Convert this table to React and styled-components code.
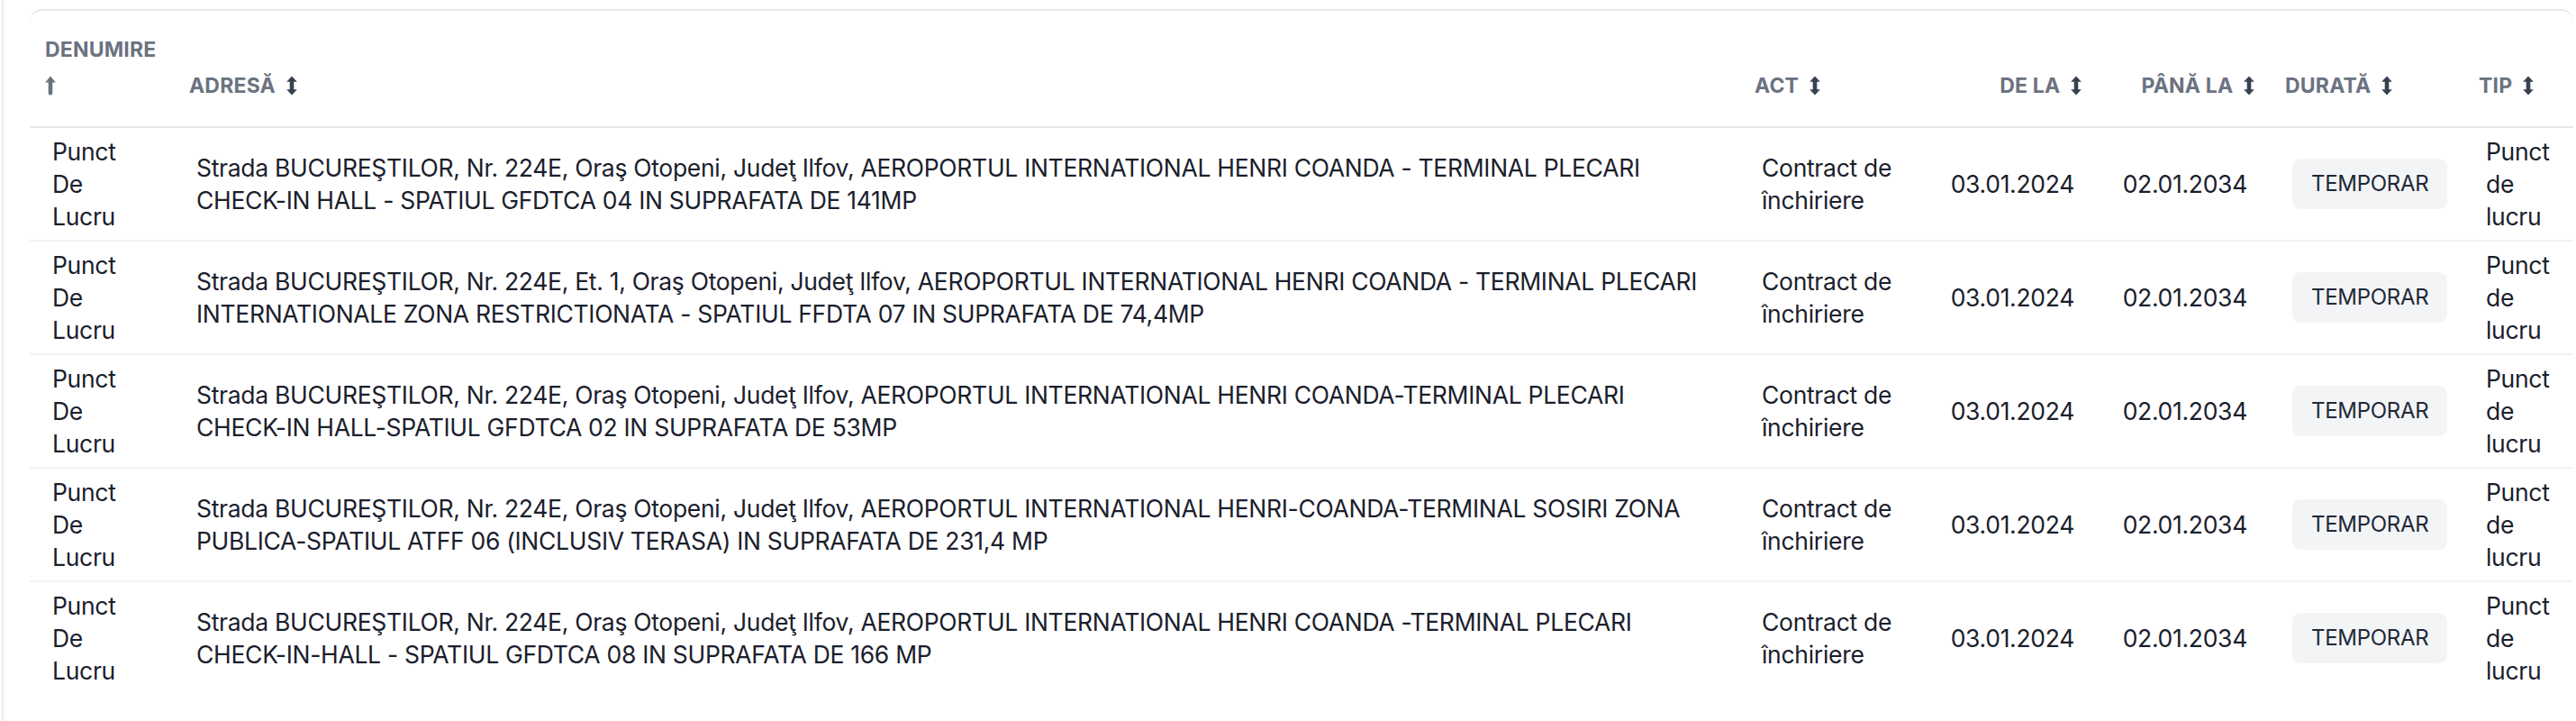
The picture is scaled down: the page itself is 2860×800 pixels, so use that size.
import React from "react";
import styled, { createGlobalStyle, css } from "styled-components";

const GlobalStyle = createGlobalStyle`
  html, body {
    margin: 0;
    padding: 0;
    background: #ffffff;
  }
  body {
    font-family: Inter, "Noto Sans", "Liberation Sans", sans-serif;
    color: #1f2937;
  }
`;

const Frame = styled.div`
  margin-left: 2px;
  border-left: 2px solid #ececee;
  padding: 10px 3px 30px 29px;
  min-height: 760px;
`;

const Card = styled.div`
  border-top: 2px solid #e5e7eb;
  border-radius: 14px 14px 0 0;
`;

const Table = styled.table`
  width: 2824px;
  table-layout: fixed;
  border-collapse: collapse;
`;

const HeadCell = styled.th`
  padding: 23px 17px 25px;
  vertical-align: bottom;
  text-align: ${(p) => (p.$right ? "right" : "left")};
  font-size: 23px;
  line-height: 40px;
  font-weight: 700;
  letter-spacing: 0.2px;
  text-transform: uppercase;
  color: #6b7280;
  border-bottom: 2px solid #e5e7eb;
`;

const Row = styled.tr`
  border-bottom: 2px solid #f1f2f4;
  &:last-child {
    border-bottom: none;
  }
`;

const Cell = styled.td`
  padding: 8px 24px 8px 25px;
  vertical-align: middle;
  font-size: 26.5px;
  line-height: 36px;
  letter-spacing: -0.3px;
  color: #1a202c;
  text-align: ${(p) => (p.$right ? "right" : "left")};
  ${(p) =>
    p.$right &&
    css`
      padding: 8px 25px 8px 24px;
    `}
  ${(p) =>
    p.$tight &&
    css`
      padding-right: 0;
    `}
`;

const SortIcon = styled.svg`
  display: inline-block;
  width: 12px;
  height: 22px;
  margin-left: 6px;
  vertical-align: -3px;
  fill: ${(p) => (p.$active ? "#6b7280" : "#374151")};
`;

const Badge = styled.span`
  display: inline-block;
  padding: 0 21px;
  height: 56px;
  line-height: 56px;
  border-radius: 9px;
  background: #f3f4f6;
  font-size: 24px;
  letter-spacing: -0.3px;
  color: #1f2937;
`;

const UpDown = () => (
  <SortIcon viewBox="0 0 12 22">
    <path d="M6 0.5 L11.8 6.8 L8.3 6.8 L8.3 15.2 L11.8 15.2 L6 21.5 L0.2 15.2 L3.7 15.2 L3.7 6.8 L0.2 6.8 Z" />
  </SortIcon>
);

const ArrowUp = () => (
  <SortIcon $active viewBox="0 0 12 22" style={{ marginLeft: 0 }}>
    <path d="M6 0.5 L11.8 7.5 L8.3 7.5 L8.3 19.3 Q8.3 21.5 6 21.5 Q3.7 21.5 3.7 19.3 L3.7 7.5 L0.2 7.5 Z" />
  </SortIcon>
);

const columns = [
  { key: "name", label: "Denumire", width: 160, icon: "up" },
  { key: "address", label: "Adresă", width: 1738 },
  { key: "act", label: "Act", width: 204 },
  { key: "from", label: "De la", width: 193, right: true },
  { key: "to", label: "Până la", width: 192, right: true },
  { key: "duration", label: "Durată", width: 215 },
  { key: "type", label: "Tip", width: 122 },
];

const rows = [
  "Strada BUCUREŞTILOR, Nr. 224E, Oraş Otopeni, Judeţ Ilfov, AEROPORTUL INTERNATIONAL HENRI COANDA - TERMINAL PLECARI CHECK-IN HALL - SPATIUL GFDTCA 04 IN SUPRAFATA DE 141MP",
  "Strada BUCUREŞTILOR, Nr. 224E, Et. 1, Oraş Otopeni, Judeţ Ilfov, AEROPORTUL INTERNATIONAL HENRI COANDA - TERMINAL PLECARI INTERNATIONALE ZONA RESTRICTIONATA - SPATIUL FFDTA 07 IN SUPRAFATA DE 74,4MP",
  "Strada BUCUREŞTILOR, Nr. 224E, Oraş Otopeni, Judeţ Ilfov, AEROPORTUL INTERNATIONAL HENRI COANDA-TERMINAL PLECARI CHECK-IN HALL-SPATIUL GFDTCA 02 IN SUPRAFATA DE 53MP",
  "Strada BUCUREŞTILOR, Nr. 224E, Oraş Otopeni, Judeţ Ilfov, AEROPORTUL INTERNATIONAL HENRI-COANDA-TERMINAL SOSIRI ZONA PUBLICA-SPATIUL ATFF 06 (INCLUSIV TERASA) IN SUPRAFATA DE 231,4 MP",
  "Strada BUCUREŞTILOR, Nr. 224E, Oraş Otopeni, Judeţ Ilfov, AEROPORTUL INTERNATIONAL HENRI COANDA -TERMINAL PLECARI CHECK-IN-HALL - SPATIUL GFDTCA 08 IN SUPRAFATA DE 166 MP",
].map((address) => ({
  name: "Punct De Lucru",
  address,
  act: "Contract de închiriere",
  from: "03.01.2024",
  to: "02.01.2034",
  duration: "TEMPORAR",
  type: "Punct de lucru",
}));

const App = () => {
  return (
    <>
      <GlobalStyle />
      <Frame>
        <Card>
          <Table>
            <colgroup>
              {columns.map((c) => (
                <col key={c.key} style={{ width: c.width }} />
              ))}
            </colgroup>
            <thead>
              <tr>
                {columns.map((c) => (
                  <HeadCell key={c.key} $right={c.right}>
                    {c.label} {c.icon === "up" ? <ArrowUp /> : <UpDown />}
                  </HeadCell>
                ))}
              </tr>
            </thead>
            <tbody>
              {rows.map((r, i) => (
                <Row key={i}>
                  <Cell>{r.name}</Cell>
                  <Cell>{r.address}</Cell>
                  <Cell>{r.act}</Cell>
                  <Cell $right>{r.from}</Cell>
                  <Cell $right>{r.to}</Cell>
                  <Cell>
                    <Badge>{r.duration}</Badge>
                  </Cell>
                  <Cell $tight>{r.type}</Cell>
                </Row>
              ))}
            </tbody>
          </Table>
        </Card>
      </Frame>
    </>
  );
};

export default App;
